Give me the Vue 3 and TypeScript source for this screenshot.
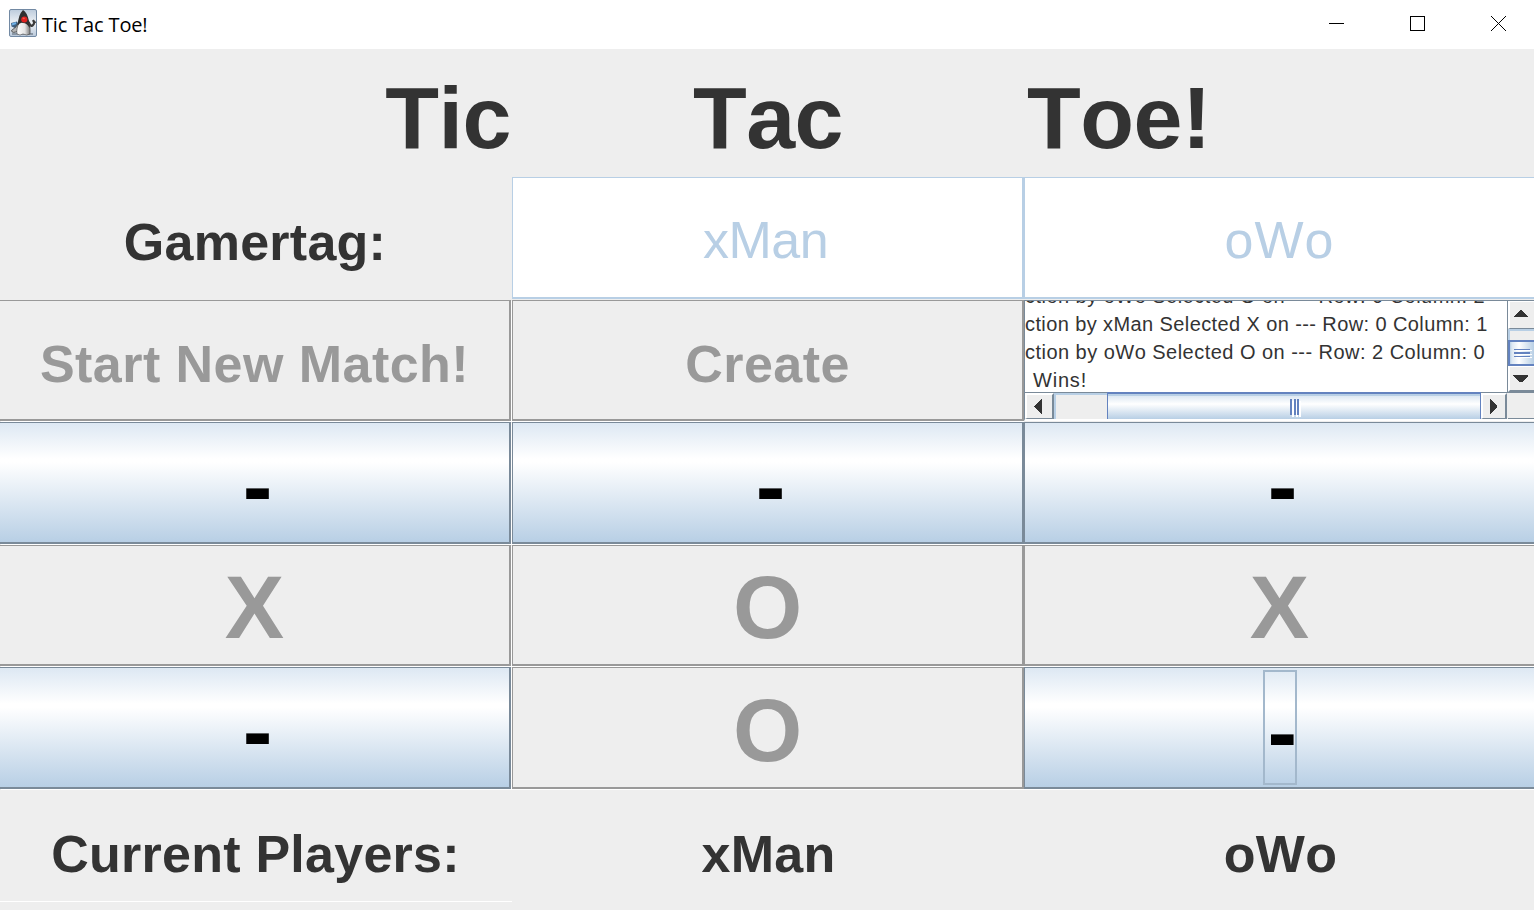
<script setup lang="ts">
import { ref, computed } from 'vue'

type Mark = 'X' | 'O' | '-'

const players = ref<string[]>(['xMan', 'oWo'])
const board = ref<Mark[]>(['-', '-', '-', 'X', 'O', 'X', '-', 'O', '-'])
const focused = ref<number>(8)
const log = ref<string[]>([
  'ction by oWo Selected O on --- Row: 0 Column: 2',
  'ction by xMan Selected X on --- Row: 0 Column: 1',
  'ction by oWo Selected O on --- Row: 2 Column: 0',
])
const rows = computed(() => [0, 3, 6].map((start) => board.value.slice(start, start + 3)))
</script>

<template>
  <div class="window">
    <header class="titlebar">
      <svg class="duke" width="28" height="28" viewBox="0 0 28 28">
        <defs>
          <linearGradient id="tile" x1="0" y1="0" x2="0" y2="1">
            <stop offset="0" stop-color="#bccbdc" />
            <stop offset="0.5" stop-color="#eef2f6" />
            <stop offset="1" stop-color="#b9c8da" />
          </linearGradient>
          <linearGradient id="belly" x1="0" y1="0" x2="1" y2="0">
            <stop offset="0" stop-color="#ffffff" />
            <stop offset="0.6" stop-color="#e4e4e4" />
            <stop offset="1" stop-color="#777" />
          </linearGradient>
        </defs>
        <rect x="0.5" y="0.5" width="27" height="27" rx="1.5" fill="url(#tile)" stroke="#7289a3" />
        <path d="M3 25 H24" stroke="#8a97a5" stroke-width="2" />
        <path d="M2 14 L8 12.5 L9.5 15 L6 19 L2.5 17.5 Z" fill="#3e5f80" />
        <path d="M3 15.5 L7 14" stroke="#6fb0e6" stroke-width="2" />
        <path d="M9.5 14 Q8 18 2.5 21.5 Q3 25 9 22 Z" fill="#b5b5b5" stroke="#4a4a4a" stroke-width="0.9" />
        <path d="M19.5 13 Q22 18.5 24 16 Q26 14 24 11 M24.5 14 L26.5 12.5" fill="none" stroke="#3a3a3a" stroke-width="2.2" />
        <path d="M10.5 12 Q7 20 8 25 Q11 27 14 25 Q18 27 21 25 Q22 18 19 11 Z" fill="url(#belly)" stroke="#444" stroke-width="0.6" />
        <path d="M14 1 Q18 3 20 12 Q21.5 17 20.5 19 Q18 14 14 14 Q11 13 8.8 16.5 Q9 6 14 1 Z" fill="#303030" />
        <ellipse cx="15.3" cy="10.4" rx="3.1" ry="3" fill="#e0211f" />
        <ellipse cx="14.7" cy="9.4" rx="1.2" ry="0.8" fill="#f5564c" />
      </svg>
      <span class="caption">Tic Tac Toe!</span>
      <svg class="controls" width="180" height="18" viewBox="0 0 180 18" shape-rendering="crispEdges">
        <rect x="0" y="8" width="15" height="1" />
        <rect x="81.5" y="1.5" width="14" height="14" fill="none" stroke="#000" />
        <path d="M162 1 L177 16 M177 1 L162 16" fill="none" stroke="#000" shape-rendering="auto" />
      </svg>
    </header>

    <main class="panel">
      <h1 class="heading right"><span>Tic</span></h1>
      <h1 class="heading"><span>Tac</span></h1>
      <h1 class="heading left"><span>Toe!</span></h1>

      <div class="label gamertag"><span>Gamertag:</span></div>
      <div v-for="p in players" :key="p" class="field" :class="p"><span>{{ p }}</span></div>

      <button class="btn off start"><span>Start New Match!</span></button>
      <button class="btn off create"><span>Create</span></button>

      <div class="scrollpane">
        <div class="view">
          <p v-for="(line, i) in log" :key="i" class="entry">{{ line }}</p>
          <p class="wins">Wins!</p>
        </div>
        <div class="vbar">
          <div class="arrow up">
            <svg width="26" height="27" shape-rendering="crispEdges"><path d="M6 16 H20 L14 9 H12 Z" /></svg>
          </div>
          <div class="vtrack"></div>
          <div class="vthumb">
            <svg width="24" height="22" shape-rendering="crispEdges">
              <path d="M4 7.5 H20 M4 14.5 H20" stroke="#6382bf" />
              <path d="M4 11 H20" stroke="#6382bf" stroke-width="2" />
              <path d="M6 8.5 H22 M6 12.5 H22 M6 15.5 H22" stroke="#fff" />
            </svg>
          </div>
          <div class="arrow down">
            <svg width="26" height="24" shape-rendering="crispEdges"><path d="M5 9 H20 V10 L14 16 H11 L5 10 Z" /></svg>
          </div>
        </div>
        <div class="hbar">
          <div class="harrow first">
            <svg width="26" height="24" shape-rendering="crispEdges"><path d="M17 5 V20 H16 L9 13 V12 L16 5 Z" /></svg>
          </div>
          <div class="htrack"></div>
          <div class="hthumb">
            <svg width="11" height="18" shape-rendering="crispEdges">
              <path d="M3 2 V18 M7 2 V18 M10 2 V18" stroke="#fff" stroke-width="2" />
              <path d="M1 0 V16 M5 0 V16 M8 0 V16" stroke="#6382bf" stroke-width="2" />
            </svg>
          </div>
          <div class="harrow last">
            <svg width="24" height="24" shape-rendering="crispEdges"><path d="M9 5 V20 H10 L16 13 V12 L10 5 Z" /></svg>
          </div>
        </div>
        <div class="corner"></div>
      </div>

      <template v-for="(row, r) in rows" :key="r">
        <button
          v-for="(mark, c) in row"
          :key="c"
          class="btn cell"
          :class="mark === '-' ? 'open' : 'off'"
        >
          <span :class="{ dash: mark === '-', focus: r * 3 + c === focused }">{{ mark }}</span>
        </button>
      </template>

      <div class="label current"><span>Current Players:</span></div>
      <div v-for="p in players" :key="'c' + p" class="label player"><span>{{ p }}</span></div>
    </main>
  </div>
</template>

<style>
html,
body {
  overflow: hidden;
}
</style>

<style scoped>
.window {
  width: 1534px;
  height: 910px;
  overflow: hidden;
  background: #eee;
  color: #333;
  font-family: "Liberation Sans", Arial, sans-serif;
  font-kerning: none;
}
.window * {
  box-sizing: border-box;
}
.titlebar {
  display: flex;
  align-items: center;
  height: 49px;
  padding: 0 25px 3px 9px;
  background: #fff;
}
.caption {
  margin-left: 5px;
  padding-top: 3px;
  color: #000;
  font: 20px/28px "Open Sans", sans-serif;
  font-kerning: normal;
  letter-spacing: -0.15px;
}
.controls {
  margin-left: auto;
  margin-top: 2px;
}
.panel {
  display: grid;
  grid-template-columns: 512px 512px 512px;
  grid-template-rows: 128px 123px 122px 123px 122px 123px 112px 9px;
}
.heading,
.label,
.field,
.btn {
  display: flex;
  align-items: center;
  justify-content: center;
  margin: 0;
  white-space: pre;
}
.heading {
  padding-top: 10px;
  font-size: 88px;
  font-weight: 700;
  line-height: 100px;
  letter-spacing: -0.5px;
}
.right {
  justify-content: flex-end;
  padding-right: 1px;
}
.left {
  justify-content: flex-start;
  padding-left: 3px;
}
.label {
  padding-top: 6px;
  font-size: 52px;
  font-weight: 700;
  letter-spacing: 0.25px;
}
.gamertag {
  padding-right: 2px;
}
.current,
.player {
  padding-top: 16px;
}
.player {
  padding-left: 1px;
}
.current {
  padding-right: 1px;
  border-bottom: 1px solid #fff;
}
.field {
  height: 122px;
  padding: 4px 4px 0 0;
  border: 1px solid #b8cfe5;
  border-right-width: 2px;
  border-bottom-width: 2px;
  background: #fff;
  color: #b8cfe5;
  font-size: 52px;
  letter-spacing: -0.5px;
}
.oWo {
  padding-right: 0;
  letter-spacing: 1px;
}
.btn {
  border: 1px solid #999;
  border-right-width: 2px;
  border-bottom-width: 2px;
  border-radius: 0;
  margin-bottom: 1px;
  padding: 8px 0 0;
  background: #eee;
  color: #999;
  font: 700 52px "Liberation Sans", Arial, sans-serif;
  font-kerning: none;
  letter-spacing: 0.45px;
  box-shadow: 0 1px #fff;
}
.btn:nth-child(3n + 1) {
  margin-right: 1px;
  border-left: 0;
  box-shadow: 1px 1px #fff;
}
.cell {
  padding-top: 5px;
  font-size: 89px;
  letter-spacing: 0;
}
.open {
  padding-top: 8px;
  border-color: #7a8a99;
  background: linear-gradient(#dde8f3 0%, #fff 30%, #fff 33%, #b8cfe5 100%);
  color: #000;
}
.dash {
  padding-left: 6px;
}
.focus {
  width: 34px;
  height: 115px;
  margin-top: -8px;
  padding: 9px 0 0 3px;
  border: 2px solid #a3b8cc;
}
.scrollpane {
  display: grid;
  grid-template-columns: 483px 26px;
  grid-template-rows: 91px 27px;
  height: 121px;
  border: 1px solid #7a8a99;
  border-bottom: 2px solid #fff;
}
.view {
  overflow: hidden;
  background: #fff;
  border-right: 1px solid #7a8a99;
  font-size: 20px;
  line-height: 28px;
  letter-spacing: 0.4px;
  white-space: pre;
}
.view p {
  margin: 0;
}
.view .entry:nth-child(odd) {
  letter-spacing: 0.47px;
}
.view p:first-child {
  margin-top: -19px;
}
.view .wins {
  margin-left: 8px;
  letter-spacing: 0.8px;
}
.vbar {
  display: grid;
  grid-template-rows: 28px 11px 26px 26px;
}
.arrow {
  background: #eee;
  border-top: 1px solid #fff;
  border-left: 2px solid #fff;
  fill: #333;
}
.arrow svg,
.harrow svg {
  display: block;
  margin: -1px 0 0 -2px;
}
.up {
  border-bottom: 1px solid #7a8a99;
}
.down {
  border-bottom: 2px solid #7a8a99;
}
.vtrack {
  border-top: 2px solid #b8cfe5;
  border-left: 2px solid #b8cfe5;
}
.vthumb {
  border: 2px solid #6382bf;
  border-right: 0;
  background: linear-gradient(90deg, #b8cfe5 0, #dde8f3 2px, #fff 9px, #b8cfe5 100%);
}
.hbar {
  display: grid;
  grid-template-columns: 29px 53px 374px 26px;
  border-top: 1px solid #7a8a99;
}
.harrow {
  border-top: 2px solid #fff;
  border-left: 2px solid #fff;
  border-right: 2px solid #7a8a99;
  border-bottom: 1px solid #7a8a99;
  fill: #333;
}
.htrack {
  border-top: 2px solid #b8cfe5;
  border-left: 2px solid #b8cfe5;
}
.hthumb {
  display: flex;
  justify-content: center;
  margin-top: -1px;
  padding: 5px 0 0 2px;
  border: 1px solid #6382bf;
  border-top-width: 2px;
  border-bottom: 0;
  background: linear-gradient(#b8cfe5 0, #b8cfe5 2px, #dde8f3 2px, #fff 10px, #b8cfe5 100%);
}
.corner {
  border-top: 1px solid #7a8a99;
  border-bottom: 1px solid #7a8a99;
}
</style>
